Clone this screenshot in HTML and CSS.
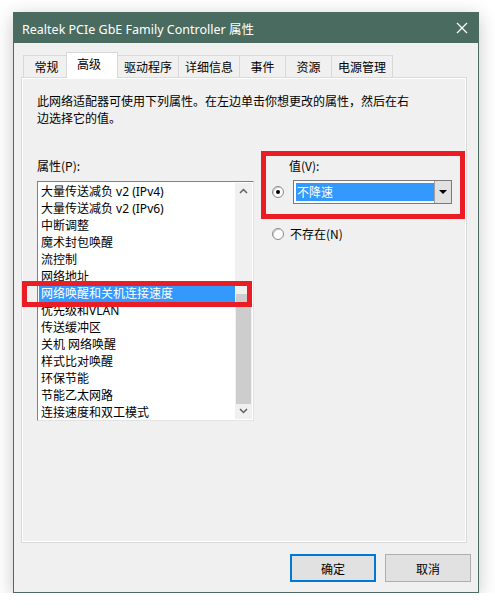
FILE: index.html
```html
<!DOCTYPE html>
<html lang="zh-CN">
<head>
  <meta charset="UTF-8">
  <title>Realtek PCIe GbE Family Controller 属性</title>
  <link rel="stylesheet" href="styles.css">
</head>
<body>
  <div class="window">
    <div class="titlebar">
      <span class="title">Realtek PCIe GbE Family Controller 属性</span>
      <svg class="close" width="12" height="12" viewBox="0 0 12 12">
        <path d="M1 1 L11 11 M11 1 L1 11" stroke="#fff" stroke-width="1.2" fill="none"/>
      </svg>
    </div>

    <div class="body">
      <div class="tabs">
        <div class="tab">常规</div>
        <div class="tab active">高级</div>
        <div class="tab">驱动程序</div>
        <div class="tab">详细信息</div>
        <div class="tab">事件</div>
        <div class="tab">资源</div>
        <div class="tab">电源管理</div>
      </div>

      <div class="panel">
        <p class="intro">此网络适配器可使用下列属性。在左边单击你想更改的属性，然后在右边选择它的值。</p>

        <div class="columns">
          <!-- liste des propriétés -->
          <div class="left">
            <div class="label">属性(P):</div>
            <div class="listwrap">
              <div class="listbox">
                <div class="items">
                  <div class="item">大量传送减负 v2 (IPv4)</div>
                  <div class="item">大量传送减负 v2 (IPv6)</div>
                  <div class="item">中断调整</div>
                  <div class="item">魔术封包唤醒</div>
                  <div class="item">流控制</div>
                  <div class="item">网络地址</div>
                  <div class="item selected">网络唤醒和关机连接速度</div>
                  <div class="item">优先级和VLAN</div>
                  <div class="item">传送缓冲区</div>
                  <div class="item">关机 网络唤醒</div>
                  <div class="item">样式比对唤醒</div>
                  <div class="item">环保节能</div>
                  <div class="item">节能乙太网路</div>
                  <div class="item">连接速度和双工模式</div>
                </div>
                <div class="scrollbar">
                  <div class="arrow">
                    <svg width="9" height="6" viewBox="0 0 9 6"><polyline points="1,5 4.5,1.5 8,5" stroke="#606060" stroke-width="1.5" fill="none"/></svg>
                  </div>
                  <div class="track"><div class="thumb"></div></div>
                  <div class="arrow">
                    <svg width="9" height="6" viewBox="0 0 9 6"><polyline points="1,1 4.5,4.5 8,1" stroke="#606060" stroke-width="1.5" fill="none"/></svg>
                  </div>
                </div>
              </div>
              <div class="mark mark-list"></div>
            </div>
          </div>

          <!-- valeur -->
          <div class="right">
            <div class="valuebox">
              <div class="label value-label">值(V):</div>
              <div class="value-row">
                <span class="radio checked"></span>
                <div class="combo">
                  <div class="combo-text">不降速</div>
                  <div class="combo-btn">
                    <svg width="8" height="4" viewBox="0 0 8 4"><polygon points="0,0 8,0 4,4" fill="#000"/></svg>
                  </div>
                </div>
              </div>
            </div>
            <div class="absent-row">
              <span class="radio"></span>
              <span>不存在(N)</span>
            </div>
          </div>
        </div>
      </div>

      <div class="footer">
        <button class="btn default">确定</button>
        <button class="btn">取消</button>
      </div>
    </div>
  </div>
</body>
</html>
```

FILE: styles.css
```css
/* Styles globaux */
body {
  margin: 0;
  padding: 0;
  background-color: #fff;
  font-family: "Noto Sans", "Noto Sans CJK SC", sans-serif;
  font-size: 12px;
  color: #000;
}

.window {
  box-sizing: border-box;
  width: 466px;
  height: 581px;
  margin: 12px 0 0 13px;
  border: 1px solid #4d6c61;
  background-color: #f0f0f0;
  box-shadow: 0 4px 18px rgba(0, 0, 0, 0.22);
}

.titlebar {
  display: flex;
  align-items: center;
  justify-content: space-between;
  height: 30px;
  padding: 0 10px 0 8px;
  background-color: #4a6b5f;
  color: #fff;
}

.title {
  font-size: 12.5px;
}

.body {
  padding: 9px 0 0 7px;
}

/* Onglets */
.tabs {
  display: flex;
  align-items: flex-end;
  height: 25px;
  padding-left: 2px;
}

.tab {
  box-sizing: border-box;
  min-width: 47px;
  height: 22px;
  padding: 0 6px;
  margin-right: -1px;
  border: 1px solid #d9d9d9;
  border-bottom: none;
  background-color: #f0f0f0;
  font-family: "Noto Sans CJK SC", sans-serif;
  line-height: 21px;
  text-align: center;
}

.tab.active {
  position: relative;
  z-index: 1;
  min-width: 52px;
  height: 26px;
  margin: 0 -1px -1px -3px;
  background-color: #fff;
  line-height: 21px;
  padding-right: 12px;
}

.panel {
  box-sizing: border-box;
  width: 446px;
  height: 466px;
  padding: 14px 0 0 15px;
  border: 1px solid #dadada;
  box-shadow: inset 0 0 0 1px #fff;
  font-family: "Noto Sans CJK SC", sans-serif;
}

.intro {
  width: 380px;
  margin: 0;
  line-height: 17px;
}

.label {
  line-height: 17px;
}

.columns {
  display: grid;
  grid-template-columns: 217px 204px;
  column-gap: 7px;
  align-items: start;
  margin-top: 25px;
}

.left {
  padding-top: 6px;
}

.listwrap {
  position: relative;
  margin-top: 7px;
}

.listbox {
  display: flex;
  box-sizing: border-box;
  height: 240px;
  padding: 1px;
  border: 1px solid;
  border-color: #828282 #e3e3e3 #e3e3e3 #828282;
  background-color: #fff;
  overflow: hidden;
}

.items {
  flex: 1;
}

.item {
  height: 17px;
  padding-left: 2px;
  line-height: 17px;
  white-space: nowrap;
  font-family: "Noto Sans", "Noto Sans CJK SC", sans-serif;
}

.item.selected {
  background-color: #3399ff;
  color: #fff;
}

.scrollbar {
  display: flex;
  flex-direction: column;
  width: 17px;
  background-color: #f0f0f0;
}

.arrow {
  display: flex;
  align-items: center;
  justify-content: center;
  height: 17px;
}

.track {
  flex: 1;
  padding-top: 95px;
}

.thumb {
  height: 110px;
  margin: 0 1px;
  background-color: #cdcdcd;
}

/* Cadres rouges d'annotation */
.mark {
  position: absolute;
  border: 5px solid #ea1c24;
}

.mark-list {
  left: -15px;
  top: 100px;
  width: 220px;
  height: 16px;
}

.valuebox {
  padding: 1px 0 10px 0;
  border: 5px solid #ea1c24;
}

.value-label {
  padding-left: 23px;
}

.value-row {
  display: flex;
  align-items: center;
  margin-top: 6px;
  padding-left: 6px;
}

.radio {
  box-sizing: border-box;
  position: relative;
  display: inline-block;
  width: 12px;
  height: 12px;
  border: 1px solid #8a8a8a;
  border-radius: 50%;
  background-color: #fff;
  box-shadow: inset 1px 1px 0 #cfcfcf;
}

.radio.checked::after {
  content: "";
  position: absolute;
  left: 3px;
  top: 3px;
  width: 4px;
  height: 4px;
  border-radius: 50%;
  background-color: #000;
}

.combo {
  display: flex;
  box-sizing: border-box;
  width: 159px;
  height: 24px;
  margin-left: 9px;
  padding: 2px;
  border: 1px solid #7a7a7a;
  background-color: #fff;
}

.combo-text {
  flex: 1;
  padding-left: 1px;
  background-color: #3399ff;
  color: #fff;
  line-height: 18px;
}

.combo-btn {
  display: flex;
  align-items: center;
  justify-content: center;
  width: 16px;
  margin: -2px -2px -2px 0;
  border-left: 1px solid #a0a0a0;
  background-color: #e1e1e1;
}

.absent-row {
  display: flex;
  align-items: center;
  gap: 6px;
  margin-top: 6px;
  padding-left: 11px;
  line-height: 17px;
}

/* Boutons */
.footer {
  display: flex;
  justify-content: flex-end;
  gap: 9px;
  margin-top: 11px;
  padding-right: 7px;
}

.btn {
  box-sizing: border-box;
  width: 86px;
  height: 28px;
  padding: 0;
  border: 1px solid #adadad;
  background-color: #e1e1e1;
  font-family: "Noto Sans CJK SC", sans-serif;
  font-size: 12px;
  color: #000;
}

.btn.default {
  border: 2px solid #0078d7;
}
```
